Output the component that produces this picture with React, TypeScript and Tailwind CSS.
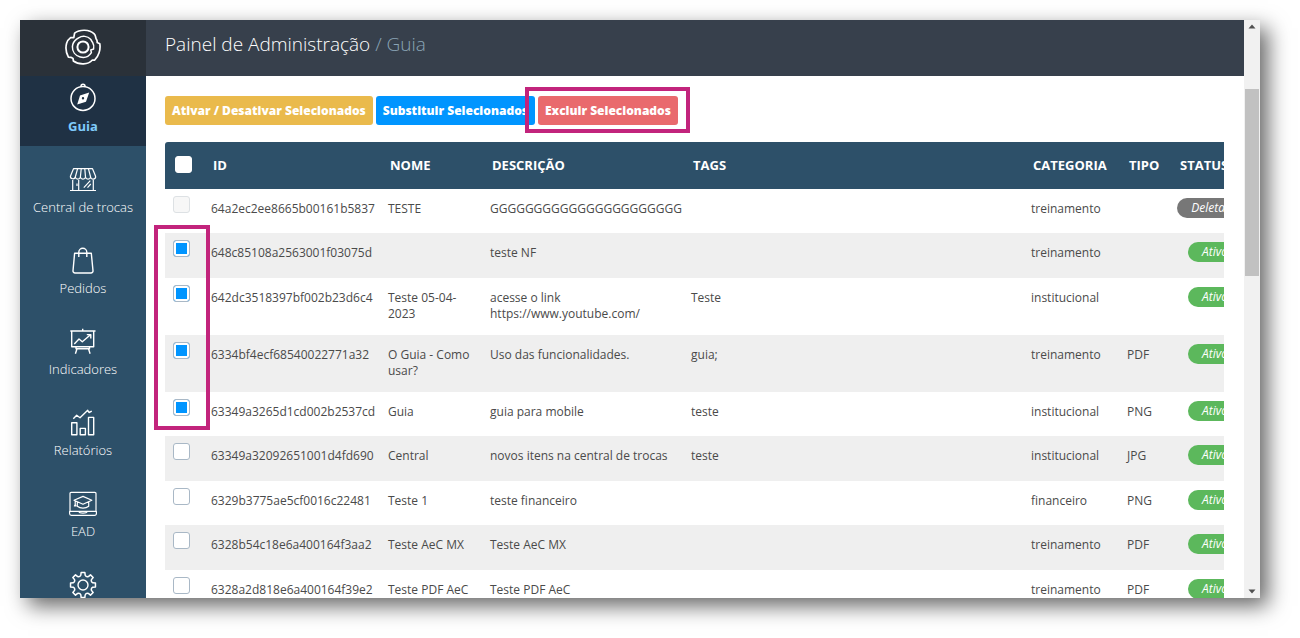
import type { ReactNode } from 'react';
import { useState } from 'react';

interface NavItem {
  label: string;
  icon: ReactNode;
  active?: boolean;
  iconOnly?: boolean;
}

interface GuideRow {
  id: string;
  name?: string;
  description: string;
  tags?: string;
  category: string;
  type?: string;
  status: 'Ativo' | 'Deletado';
}

const GEAR_PATH = (() => {
  const pts: string[] = [];
  for (let i = 0; i < 8; i++) {
    const base = (i * Math.PI) / 4;
    const at = (offset: number, r: number) =>
      `${(14 + r * Math.sin(base + offset)).toFixed(2)} ${(14 - r * Math.cos(base + offset)).toFixed(2)}`;
    pts.push(`${i === 0 ? 'M' : 'L'}${at(-0.22, 10)} L${at(-0.15, 12.6)} L${at(0.15, 12.6)} L${at(0.22, 10)} Q${at(0.39, 8.4)} ${at(0.565, 10)}`);
  }
  return pts.join(' ') + 'Z';
})();

function Icon({ children }: { children: ReactNode }) {
  return (
    <svg
      viewBox="0 0 28 28"
      className="w-7 h-7 overflow-visible"
      fill="none"
      stroke="currentColor"
      strokeWidth="1.2"
      strokeLinejoin="round"
      aria-hidden="true"
    >
      {children}
    </svg>
  );
}

const NAV: NavItem[] = [
  {
    label: 'Guia',
    active: true,
    icon: (
      <Icon>
        <circle cx="14" cy="14.4" r="12" strokeWidth="1.5" />
        <path d="M12 2.2a2 2 0 0 1 4 0" strokeWidth="1.5" />
        <path
          d="M20.2 8.4 17 17.7 8.2 20.4 11 11.5ZM14 13.1a1.2 1.2 0 1 0 0 2.4a1.2 1.2 0 0 0 0-2.4Z"
          fill="currentColor"
          fillRule="evenodd"
          stroke="none"
        />
      </Icon>
    ),
  },
  {
    label: 'Central de trocas',
    icon: (
      <Icon>
        <path d="M4.5 2.7h19L26.6 10.2a2.5 2.5 0 0 1-5 .8a2.6 2.6 0 0 1-5.1 0a2.6 2.6 0 0 1-5.1 0a2.6 2.6 0 0 1-5.1 0a2.5 2.5 0 0 1-4.9-.8Z" />
        <path d="M8.6 2.7 6.3 11M12.2 2.7 11.4 11M15.8 2.7 16.5 11M19.4 2.7 21.6 11" />
        <path d="M3.7 14v10.3M9.7 14v10.3M24.3 14v10.3M1 24.5h26M8 17.5v2.5M14.8 21.6l6.5-7M18.5 21.6l3.3-3.6" />
      </Icon>
    ),
  },
  {
    label: 'Pedidos',
    icon: (
      <Icon>
        <path d="M5.6 6.3h16.7L24 23.8a2 2 0 0 1-2 2.2H6a2 2 0 0 1-2-2.2Z" strokeWidth="1.4" />
        <path d="M9.8 10V5.3a4 4 0 0 1 8 0V10" strokeWidth="1.4" />
      </Icon>
    ),
  },
  {
    label: 'Indicadores',
    icon: (
      <Icon>
        <path d="M13.7.8v2M1.3 3h25.2M2.7 3v15.7h22V3M7 18.7v2h13.5v-2M8 20.7 6.4 25.8M19.5 20.7 21.1 25.8" strokeWidth="1.4" />
        <path d="M5.3 16 10 11l3.3 2.8L21.5 6.8M17.8 6.6h4v3.8" strokeWidth="1.4" />
      </Icon>
    ),
  },
  {
    label: 'Relatórios',
    icon: (
      <Icon>
        <path d="M2.7 13.7h5.2v12H2.7ZM11.2 19.4h5.2v6.3h-5.2ZM19.5 8.4h5.2v17.3h-5.2Z" strokeWidth="1.4" />
        <path d="M4.3 9.7 7.7 6.3 11 8.7 18.7 1.3 20 3.5 22.8 2.2" strokeWidth="1.4" />
      </Icon>
    ),
  },
  {
    label: 'EAD',
    icon: (
      <Icon>
        <path d="M1 21.3V3.6a1.2 1.2 0 0 1 1.2-1.2h23.6A1.2 1.2 0 0 1 27 3.6v17.7M.6 21.4h26.8v2.2a1.8 1.8 0 0 1-1.8 1.8H2.4a1.8 1.8 0 0 1-1.8-1.8ZM9.8 21.6c.6 2 7.8 2 8.4 0" />
        <path d="M5 10.3 14 6.4l8.8 3.9L14 14.3ZM8.3 12v4.2c3 2.6 8.4 2.6 11.4 0V12M6.2 11v3.4l-.8 1.6h1.6l-.8-1.6" />
      </Icon>
    ),
  },
  {
    label: 'Configurações',
    iconOnly: true,
    icon: (
      <Icon>
        <path d={GEAR_PATH} strokeWidth="1.5" />
        <circle cx="14" cy="14" r="5" strokeWidth="1.4" />
      </Icon>
    ),
  },
];

const ROWS: GuideRow[] = [
  { id: '64a2ec2ee8665b00161b5837', name: 'TESTE', description: 'GGGGGGGGGGGGGGGGGGGGGG', category: 'treinamento', status: 'Deletado' },
  { id: '648c85108a2563001f03075d', description: 'teste NF', category: 'treinamento', status: 'Ativo' },
  { id: '642dc3518397bf002b23d6c4', name: 'Teste 05-04-2023', description: 'acesse o link https://www.youtube.com/', tags: 'Teste', category: 'institucional', status: 'Ativo' },
  { id: '6334bf4ecf68540022771a32', name: 'O Guia - Como usar?', description: 'Uso das funcionalidades.', tags: 'guia;', category: 'treinamento', type: 'PDF', status: 'Ativo' },
  { id: '63349a3265d1cd002b2537cd', name: 'Guia', description: 'guia para mobile', tags: 'teste', category: 'institucional', type: 'PNG', status: 'Ativo' },
  { id: '63349a32092651001d4fd690', name: 'Central', description: 'novos itens na central de trocas', tags: 'teste', category: 'institucional', type: 'JPG', status: 'Ativo' },
  { id: '6329b3775ae5cf0016c22481', name: 'Teste 1', description: 'teste financeiro', category: 'financeiro', type: 'PNG', status: 'Ativo' },
  { id: '6328b54c18e6a400164f3aa2', name: 'Teste AeC MX', description: 'Teste AeC MX', category: 'treinamento', type: 'PDF', status: 'Ativo' },
  { id: '6328a2d818e6a400164f39e2', name: 'Teste PDF AeC', description: 'Teste PDF AeC', category: 'treinamento', type: 'PDF', status: 'Ativo' },
];

const CHECKBOX =
  'block appearance-none w-[17px] h-[17px] rounded-[3px] border border-[#a9b8c6] bg-white checked:bg-[#0095ff] checked:shadow-[inset_0_0_0_2px_white] disabled:bg-[#f7f7f7] disabled:border-[#dde1e4]';

const ACTION = 'h-[29px] px-[7px] rounded-[3px] text-white text-xs font-extrabold whitespace-nowrap';

const CELL = 'px-1.5 pt-3 pb-[13px]';

function Logo() {
  return (
    <svg viewBox="0 0 36 36" className="w-9 h-9" fill="none" stroke="white" strokeWidth="1.7" strokeLinejoin="round" aria-hidden="true">
      <path d="M9.6 4.2C14.5.2 24.5.2 29.2 4.8C30.8 6.4 30.4 8 31 9.4C32 10.8 32.4 11.8 32.2 13.6L34.8 14.8C35.8 20.6 33.6 27.4 29.6 31.2L27.4 31C24.6 34.2 20.8 35 17.6 34.8C14 34.8 10.8 33.8 8.4 32L8 29.4C6.6 28.4 5.2 28.2 3.4 28.2C1.4 24.4.4 18.6 1.6 14.2C2.4 11.6 4 9.8 5.6 8.6L8.8 8.6L9.6 4.2Z" />
      <path d="M11.6 10.2L13.6 8.8C17.4 6.4 22.6 7 25.4 10C26.6 11.2 26.6 12.6 27.6 13.4C29.2 16 29 18 28.6 20L25.8 21L26.4 23.6C23.8 27.6 19.6 29.2 15.2 28C10.2 26.6 7.2 22.4 7.4 17.6C7.6 14.6 8.8 12.4 11.6 10.2Z" strokeWidth="1.5" />
      <circle cx="18" cy="18" r="5.6" strokeWidth="2" />
    </svg>
  );
}

function Sidebar() {
  return (
    <nav className="w-[126px] shrink-0 overflow-hidden bg-[#2d5069] text-white">
      <div className="h-14 flex items-center justify-center pb-0.5 bg-[#2a3139]">
        <Logo />
      </div>
      {NAV.map((item) => (
        <a
          key={item.label}
          href="#"
          aria-label={item.label}
          aria-current={item.active ? 'page' : undefined}
          className={`flex flex-col items-center text-[13px] leading-5 ${
            item.active ? 'gap-1 pt-2 h-[70px] bg-[#1f3144]' : 'gap-[3px] pt-5 h-[81px] font-light'
          }`}
        >
          {item.icon}
          {!item.iconOnly && <span className={item.active ? 'font-bold text-[#7fcbfb]' : ''}>{item.label}</span>}
        </a>
      ))}
    </nav>
  );
}

function Scrollbar() {
  return (
    <div className="w-4 shrink-0 flex flex-col items-center bg-[#f1f1f1]" aria-hidden="true">
      <svg viewBox="0 0 16 14" className="w-4 h-3.5" fill="#505050">
        <path d="M4.5 8.5 8 4.5l3.5 4Z" />
      </svg>
      <div className="flex-1 w-full px-px pt-[55px]">
        <div className="h-[187px] bg-[#c1c1c1]" />
      </div>
      <svg viewBox="0 0 16 14" className="w-4 h-3.5" fill="#505050">
        <path d="M4.5 5.5h7L8 9.5Z" />
      </svg>
    </div>
  );
}

export default function App() {
  const [selected, setSelected] = useState<string[]>(ROWS.slice(1, 5).map((row) => row.id));

  const toggle = (id: string) =>
    setSelected((prev) => (prev.includes(id) ? prev.filter((x) => x !== id) : [...prev, id]));

  return (
    <div className="h-screen bg-white pt-5 pl-5 pr-10 pb-10 font-['Open_Sans','Noto_Sans',sans-serif]">
      <div className="h-full flex shadow-[8px_8px_20px_rgba(0,0,0,0.6)]">
        <Sidebar />

        <div className="flex-1 min-w-0 flex flex-col bg-white">
          <header className="h-14 shrink-0 flex items-center px-[19px] pb-2 bg-[#37404c]">
            <h1 className="text-[19px] font-light text-white">
              Painel de Administração <span className="text-[#8aa4b5]">/ Guia</span>
            </h1>
          </header>

          <main className="flex-1 min-h-0 overflow-hidden pt-5 pr-5 pl-[19px]">
            <div className="flex gap-[3px] mb-[17px]">
              <button className={`${ACTION} bg-[#eaba4c]`}>Ativar / Desativar Selecionados</button>
              <button className={`${ACTION} bg-[#0095ff]`}>Substituir Selecionados</button>
              <div className="relative">
                <button className={`${ACTION} bg-[#e96a6d]`}>Excluir Selecionados</button>
                <div className="absolute -top-[9px] -bottom-2 -left-[13px] -right-3 border-4 border-[#c2247c] pointer-events-none" />
              </div>
            </div>

            <div className="relative">
              <div className="overflow-hidden rounded-l-[3px]">
                <table className="table-fixed w-[calc(100%+34px)] text-left text-xs leading-4 text-[#4a4a4a]">
                  <colgroup>
                    <col className="w-10" />
                    <col className="w-[177px]" />
                    <col className="w-[102px]" />
                    <col className="w-[201px]" />
                    <col />
                    <col className="w-24" />
                    <col className="w-[51px]" />
                    <col className="w-[86px]" />
                  </colgroup>
                  <thead>
                    <tr className="h-[47px] bg-[#2d5069] text-white text-[13px]">
                      <th className="pl-2.5 pb-0.5">
                        <input type="checkbox" aria-label="Selecionar todos" className={`${CHECKBOX} border-white`} />
                      </th>
                      <th className="pl-2 pb-0.5 font-bold">ID</th>
                      <th className="pl-2 pb-0.5 font-bold">NOME</th>
                      <th className="pl-2 pb-0.5 font-bold">DESCRIÇÃO</th>
                      <th className="pl-2 pb-0.5 font-bold">TAGS</th>
                      <th className="pl-2 pb-0.5 font-bold">CATEGORIA</th>
                      <th className="pl-2 pb-0.5 font-bold">TIPO</th>
                      <th className="pl-2 pb-0.5 font-bold">STATUS</th>
                    </tr>
                  </thead>
                  <tbody>
                    {ROWS.map((row) => (
                      <tr key={row.id} className="h-11 align-top even:h-[45px] even:bg-[#efefef]">
                        <td className="pl-2 pt-[7px]">
                          <input
                            type="checkbox"
                            aria-label={`Selecionar ${row.id}`}
                            className={CHECKBOX}
                            disabled={row.status === 'Deletado'}
                            checked={selected.includes(row.id)}
                            onChange={() => toggle(row.id)}
                          />
                        </td>
                        <td className={CELL}>{row.id}</td>
                        <td className={CELL}>{row.name}</td>
                        <td className={CELL}>{row.description}</td>
                        <td className={CELL}>{row.tags}</td>
                        <td className={CELL}>{row.category}</td>
                        <td className={CELL}>{row.type}</td>
                        <td className="pt-[9px] text-center">
                          <span
                            className={`inline-block px-3.5 leading-5 rounded-full italic text-white ${
                              row.status === 'Ativo' ? 'bg-[#5cb85c]' : 'bg-[#777777]'
                            }`}
                          >
                            {row.status}
                          </span>
                        </td>
                      </tr>
                    ))}
                  </tbody>
                </table>
              </div>
              <div className="absolute top-[83px] -left-[11px] w-14 h-[205px] border-4 border-[#c2247c] pointer-events-none" />
            </div>
          </main>
        </div>

        <Scrollbar />
      </div>
    </div>
  );
}
